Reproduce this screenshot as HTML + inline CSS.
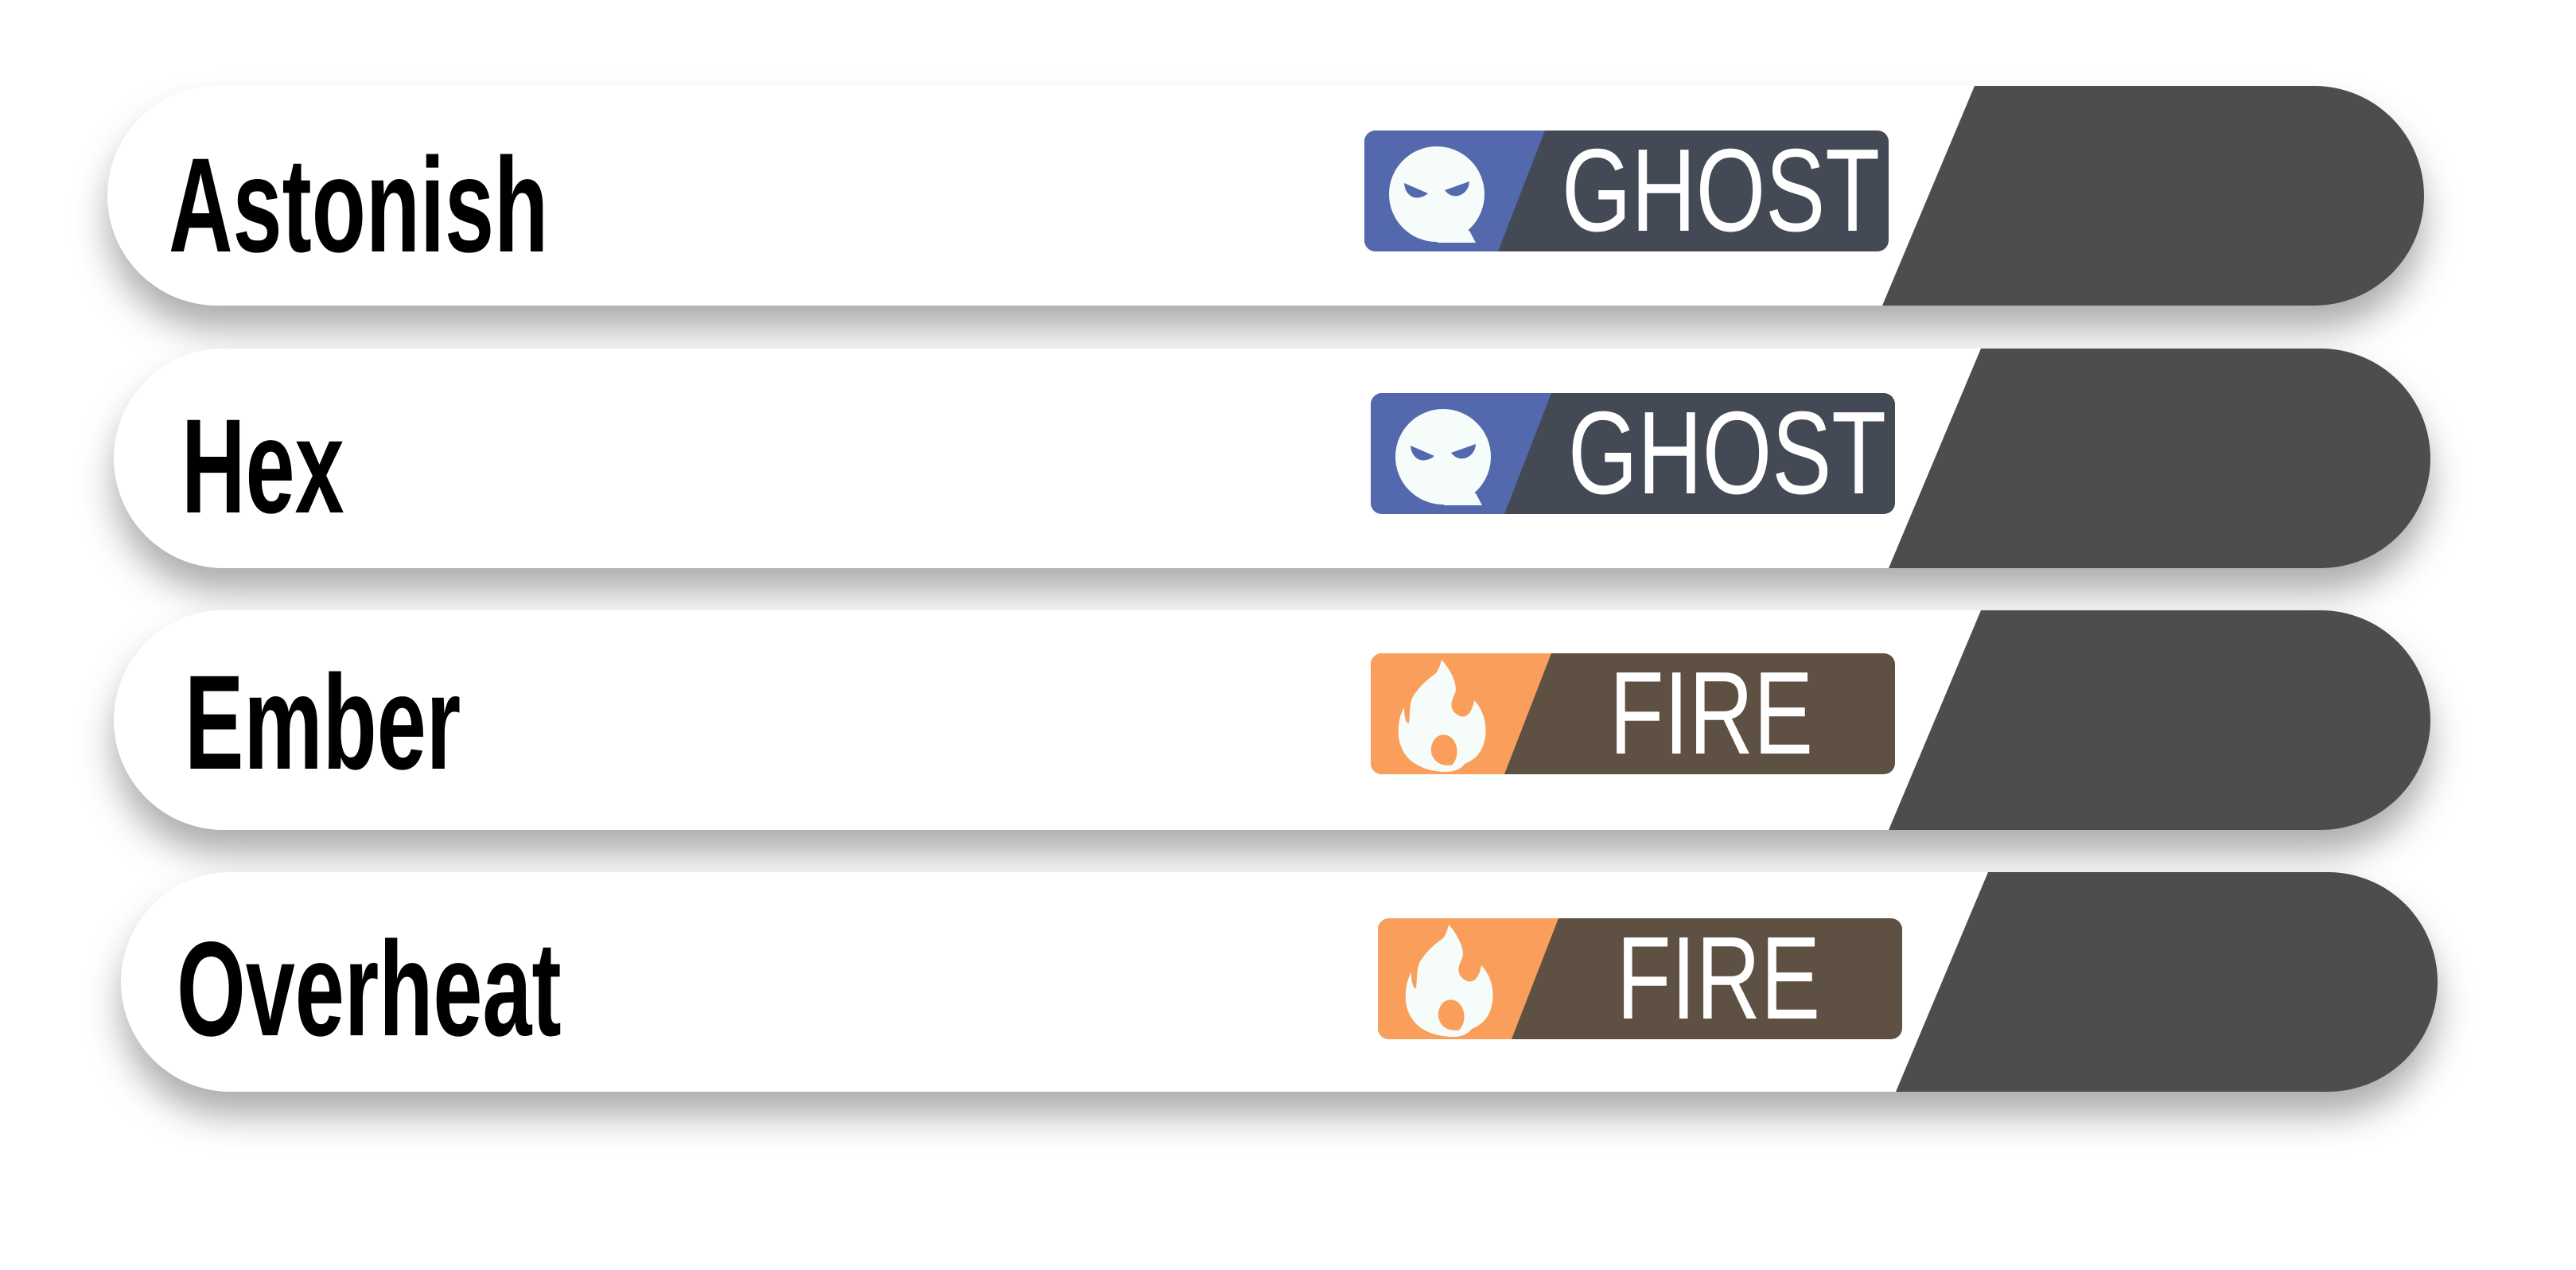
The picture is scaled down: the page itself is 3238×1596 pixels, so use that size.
<!DOCTYPE html>
<html><head><meta charset="utf-8"><style>
html,body{margin:0;padding:0;background:#fff;width:3238px;height:1596px;overflow:hidden;position:relative;font-family:"Liberation Sans",sans-serif}
.row{position:absolute;left:0;width:3238px;height:276px}
.row svg.bar{position:absolute;left:0;top:0;overflow:visible;filter:drop-shadow(0 30px 22px rgba(0,0,0,.32))}
.name{position:absolute;top:65px;font-weight:bold;font-size:169px;line-height:1;color:#000;transform:scaleX(.66);transform-origin:0 0;white-space:nowrap}
.badge{position:absolute;width:659px;height:152px;top:56px}
.bt{position:absolute;top:0;height:152px;line-height:152px;color:#fff;font-size:148px;transform:scaleX(.76);white-space:nowrap;text-align:center;width:500px}
</style></head><body>

<div class="row" style="top:108px">
<svg class="bar" width="3238" height="276"><rect x="135" y="0" width="2912" height="276" rx="138" fill="#fff"/><path d="M2482,0 H2909 A138,138 0 0 1 2909,276 H2366 Z" fill="#4d4d4d"/></svg>
<div class="name" style="left:212px">Astonish</div>
<div class="badge" style="left:1715px">
<svg width="659" height="152"><rect width="659" height="152" rx="14" fill="#434a55"/><path d="M14,0 H227 L168,152 H14 A14,14 0 0 1 0,138 V14 A14,14 0 0 1 14,0Z" fill="#5468ad"/>
<circle cx="91" cy="80" r="60" fill="#f6fcf9"/><path d="M122,122 L132,126 L140,141 L91,141 Z" fill="#f6fcf9"/>
<path d="M50,66 L80,79 Q72,86 62,84 Q51,80 50,66Z M132,64 L101,75 Q108,84 118,82 Q131,78 132,64Z" fill="#5468ad"/></svg>
<div class="bt" style="left:188px">GHOST</div></div>
</div>

<div class="row" style="top:438px">
<svg class="bar" width="3238" height="276"><rect x="143" y="0" width="2912" height="276" rx="138" fill="#fff"/><path d="M2490,0 H2917 A138,138 0 0 1 2917,276 H2374 Z" fill="#4d4d4d"/></svg>
<div class="name" style="left:228px;top:63px">Hex</div>
<div class="badge" style="left:1723px">
<svg width="659" height="152"><rect width="659" height="152" rx="14" fill="#434a55"/><path d="M14,0 H227 L168,152 H14 A14,14 0 0 1 0,138 V14 A14,14 0 0 1 14,0Z" fill="#5468ad"/>
<circle cx="91" cy="80" r="60" fill="#f6fcf9"/><path d="M122,122 L132,126 L140,141 L91,141 Z" fill="#f6fcf9"/>
<path d="M50,66 L80,79 Q72,86 62,84 Q51,80 50,66Z M132,64 L101,75 Q108,84 118,82 Q131,78 132,64Z" fill="#5468ad"/></svg>
<div class="bt" style="left:188px">GHOST</div></div>
</div>

<div class="row" style="top:767px">
<svg class="bar" width="3238" height="276"><rect x="143" y="0" width="2912" height="276" rx="138" fill="#fff"/><path d="M2490,0 H2917 A138,138 0 0 1 2917,276 H2374 Z" fill="#4d4d4d"/></svg>
<div class="name" style="left:232px;top:56px">Ember</div>
<div class="badge" style="left:1723px;top:54px">
<svg width="659" height="152"><rect width="659" height="152" rx="14" fill="#5f5044"/><path d="M14,0 H227 L168,152 H14 A14,14 0 0 1 0,138 V14 A14,14 0 0 1 14,0Z" fill="#f99f5b"/>
<path d="M89,8 C100,20 110,40 106,50 C100,62 98,72 112,79 C122,82 128,72 130,59 C142,72 146,88 144,105 C140,130 125,140 98,144 C106,138 110,130 108,118 C105,104 92,98 82,106 C72,116 74,135 90,140 C100,142 110,140 118,139 C110,150 95,150 82,148 C50,143 38,125 35,105 C34,85 38,75 42,68 C42,80 44,88 48,88 C50,70 48,60 56,50 C66,36 78,28 82,25 C86,20 88,12 89,8 Z" fill="#f6fcf9"/></svg>
<div class="bt" style="left:178px">FIRE</div></div>
</div>

<div class="row" style="top:1096px">
<svg class="bar" width="3238" height="276"><rect x="152" y="0" width="2912" height="276" rx="138" fill="#fff"/><path d="M2499,0 H2926 A138,138 0 0 1 2926,276 H2383 Z" fill="#4d4d4d"/></svg>
<div class="name" style="left:222px;top:62px">Overheat</div>
<div class="badge" style="left:1732px;top:58px">
<svg width="659" height="152"><rect width="659" height="152" rx="14" fill="#5f5044"/><path d="M14,0 H227 L168,152 H14 A14,14 0 0 1 0,138 V14 A14,14 0 0 1 14,0Z" fill="#f99f5b"/>
<path d="M89,8 C100,20 110,40 106,50 C100,62 98,72 112,79 C122,82 128,72 130,59 C142,72 146,88 144,105 C140,130 125,140 98,144 C106,138 110,130 108,118 C105,104 92,98 82,106 C72,116 74,135 90,140 C100,142 110,140 118,139 C110,150 95,150 82,148 C50,143 38,125 35,105 C34,85 38,75 42,68 C42,80 44,88 48,88 C50,70 48,60 56,50 C66,36 78,28 82,25 C86,20 88,12 89,8 Z" fill="#f6fcf9"/></svg>
<div class="bt" style="left:178px">FIRE</div></div>
</div>

</body></html>
